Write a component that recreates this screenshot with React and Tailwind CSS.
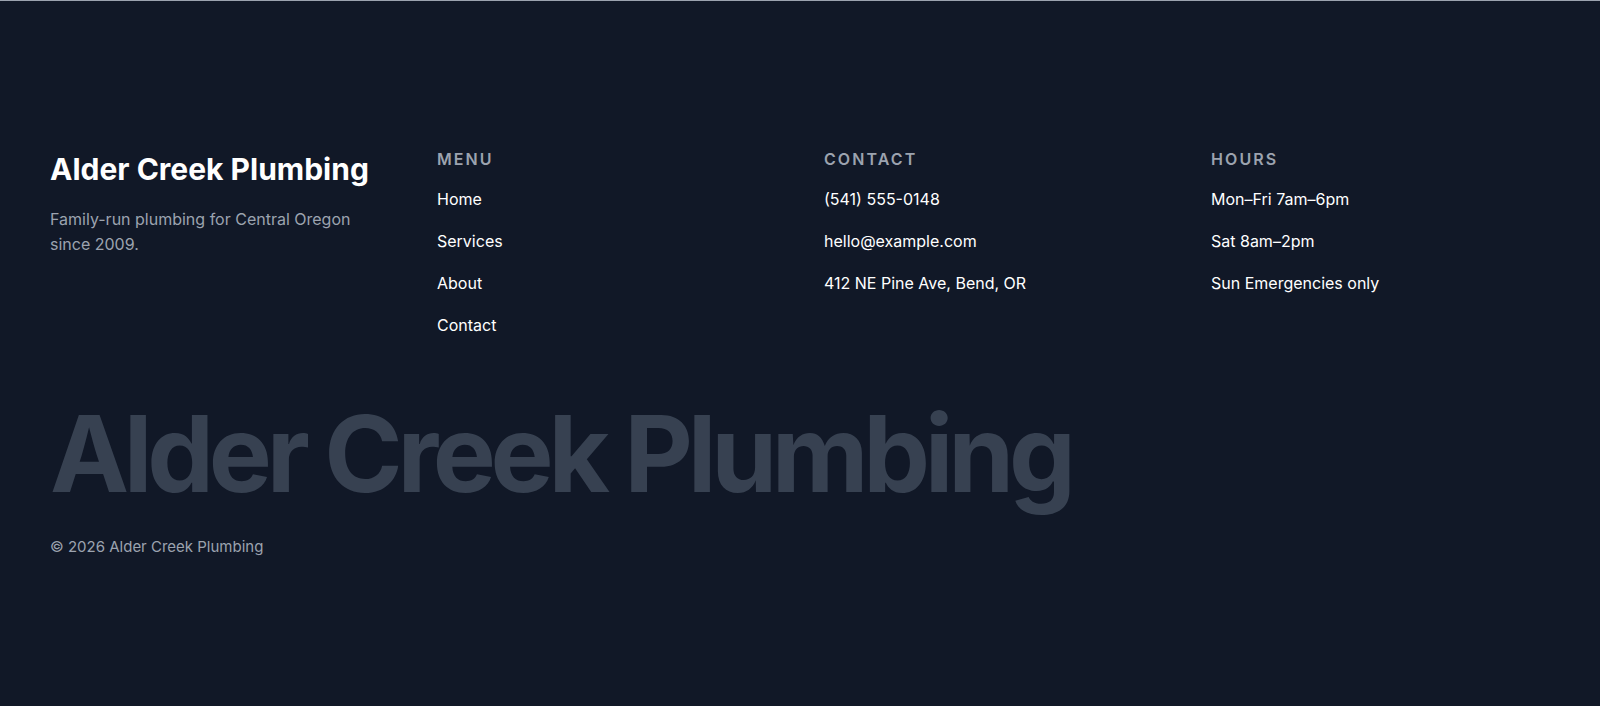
import React from 'react';

const menu = ['Home', 'Services', 'About', 'Contact'];
const contact = ['(541) 555-0148', 'hello@example.com', '412 NE Pine Ave, Bend, OR'];
const hours = ['Mon–Fri 7am–6pm', 'Sat 8am–2pm', 'Sun Emergencies only'];

const Column = ({ title, items }) => (
  <div>
    <h3 className="text-base font-semibold uppercase tracking-[0.13em] text-[#9ca3af] leading-6">{title}</h3>
    <ul className="mt-[15px] flex flex-col gap-4">
      {items.map(item => (
        <li key={item} className="text-base leading-[26px] text-white">{item}</li>
      ))}
    </ul>
  </div>
);

const App = () => {
  return (
    <footer
      className="min-h-[706px] border-t border-[#9ca3af] bg-[#111827] px-[50px] pt-[146px]"
      style={{ fontFamily: 'Inter, "Noto Sans", sans-serif' }}
    >
      <div className="grid grid-cols-4 gap-12">
        <div>
          <h2 className="text-3xl font-bold leading-[44px] text-white">Alder Creek Plumbing</h2>
          <p className="mt-4 text-base leading-[25px] text-[#9ca3af]">
            Family-run plumbing for Central Oregon since 2009.
          </p>
        </div>
        <Column title="Menu" items={menu} />
        <Column title="Contact" items={contact} />
        <Column title="Hours" items={hours} />
      </div>

      {/* oversized brand name under the columns */}
      <div className="mt-[63px] text-[106px] font-bold leading-none tracking-tighter text-[#374151] whitespace-nowrap">
        Alder Creek Plumbing
      </div>

      <p className="mt-[30px] text-[15px] leading-5 text-[#9ca3af]">© 2026 Alder Creek Plumbing</p>
    </footer>
  );
};

export default App;
